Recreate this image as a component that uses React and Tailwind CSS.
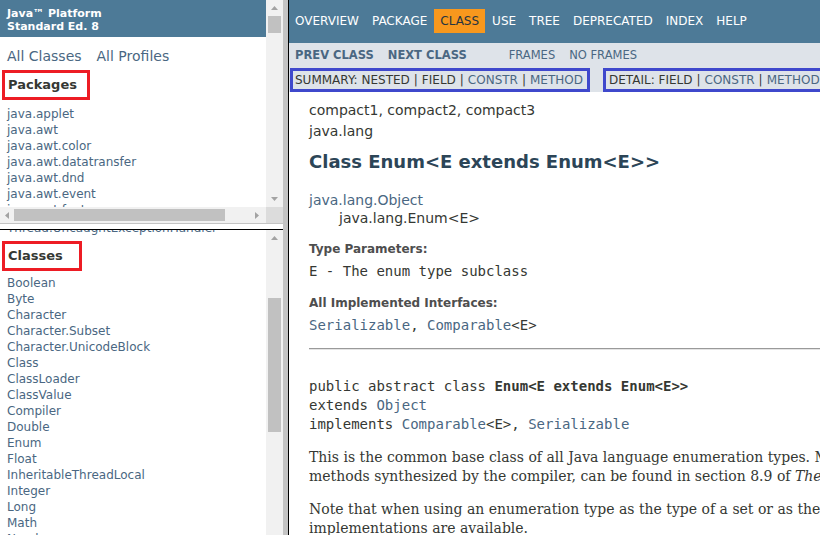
import React from "react";

const LINK = "text-[#4a6782]";

function Arrow({ dir }) {
  const pts = {
    up: "0,4 3.5,0 7,4",
    down: "0,0 7,0 3.5,4",
    left: "4,0 4,7 0,3.5",
    right: "0,0 0,7 4,3.5",
  };
  const flat = dir === "up" || dir === "down";
  return (
    <svg width={flat ? 7 : 4} height={flat ? 4 : 7} className="block">
      <polygon points={pts[dir]} fill="#a3a3a3" />
    </svg>
  );
}

const packages = [
  "java.applet",
  "java.awt",
  "java.awt.color",
  "java.awt.datatransfer",
  "java.awt.dnd",
  "java.awt.event",
  "java.awt.font",
  "java.awt.geom",
];

const classes = [
  "Boolean",
  "Byte",
  "Character",
  "Character.Subset",
  "Character.UnicodeBlock",
  "Class",
  "ClassLoader",
  "ClassValue",
  "Compiler",
  "Double",
  "Enum",
  "Float",
  "InheritableThreadLocal",
  "Integer",
  "Long",
  "Math",
  "Number",
  "Object",
];

const topNav = ["Overview", "Package", "Class", "Use", "Tree", "Deprecated", "Index", "Help"];

function RedBox({ children, w }) {
  return (
    <div
      className={`ml-[2px] h-[30px] border-[3px] border-[#ed1c24] pl-[3px] flex items-center text-[13px] font-bold text-[#353833] ${w}`}
    >
      {children}
    </div>
  );
}

function LeftFrames() {
  return (
    <div className="w-[283px] flex flex-col shrink-0">
      {/* top frame */}
      <div className="h-[223px] flex flex-col">
        <div className="h-[207px] flex">
          <div className="w-[266px] overflow-hidden">
            <div className="h-[37px] bg-[#4d7a97] pl-[7px] pt-[7px] text-white font-bold text-[11px] leading-[13px]">
              <div>Java™ Platform</div>
              <div>Standard Ed. 8</div>
            </div>
            <div className={`mt-[10px] pl-[7px] text-[14px] leading-[18px] whitespace-nowrap flex gap-[15px] ${LINK}`}>
              <span>All Classes</span>
              <span>All Profiles</span>
            </div>
            <div className="mt-[5px]">
              <RedBox w="w-[88px]">Packages</RedBox>
            </div>
            <ul className={`mt-[6px] pl-[7px] text-[12px] leading-[16px] whitespace-nowrap ${LINK}`}>
              {packages.map((p) => (
                <li key={p}>{p}</li>
              ))}
            </ul>
          </div>
          <div className="w-[17px] bg-[#f1f1f1] flex flex-col items-center">
            <div className="h-[16px] flex items-center justify-center">
              <Arrow dir="up" />
            </div>
            <div className="w-[13px] h-[17px] bg-[#c1c1c1]" />
            <div className="flex-1" />
            <div className="h-[16px] flex items-center justify-center">
              <Arrow dir="down" />
            </div>
          </div>
        </div>
        <div className="h-[16px] flex">
          <div className="w-[266px] bg-[#f1f1f1] flex items-center">
            <div className="w-[14px] flex justify-center">
              <Arrow dir="left" />
            </div>
            <div className="w-[211px] h-[12px] bg-[#c1c1c1]" />
            <div className="flex-1" />
            <div className="w-[18px] flex justify-center">
              <Arrow dir="right" />
            </div>
          </div>
          <div className="w-[17px] bg-[#dcdcdc]" />
        </div>
      </div>
      <div className="h-[1px] bg-[#c4c4c4]" />
      <div className="h-[5px] bg-white" />
      <div className="h-[1px] bg-black" />
      {/* bottom frame */}
      <div className="flex-1 flex min-h-0">
        <div className="w-[266px] overflow-hidden">
          <div className={`-mt-[10px] pl-[7px] text-[12px] leading-[16px] whitespace-nowrap ${LINK}`}>
            Thread.UncaughtExceptionHandler
          </div>
          <div className="mt-[5px]">
            <RedBox w="w-[80px]">Classes</RedBox>
          </div>
          <ul className={`mt-[4px] pl-[7px] text-[12px] leading-[16px] whitespace-nowrap ${LINK}`}>
            {classes.map((c) => (
              <li key={c}>{c}</li>
            ))}
          </ul>
        </div>
        <div className="w-[17px] bg-[#f1f1f1] flex flex-col items-center">
          <div className="h-[16px] flex items-center justify-center">
            <Arrow dir="up" />
          </div>
          <div className="mt-[52px] w-[13px] h-[134px] bg-[#c1c1c1]" />
        </div>
      </div>
    </div>
  );
}

function Sep() {
  return <span className="px-[4px]">|</span>;
}

function ClassPage() {
  return (
    <div className="flex-1 min-w-0 overflow-hidden">
      <div className="h-[43px] bg-[#4d7a97] pt-[9px]">
        <ul className="flex gap-[1px] text-[12px] leading-[14px] uppercase whitespace-nowrap">
          {topNav.map((n) => (
            <li
              key={n}
              className={
                n === "Class"
                  ? "px-[6px] py-[5px] bg-[#f8981d] text-[#253441]"
                  : "px-[6px] py-[5px] text-white"
              }
            >
              {n}
            </li>
          ))}
        </ul>
      </div>
      <div className="h-[49px] bg-[#dee3e9] uppercase whitespace-nowrap">
        <div className="h-[25px] flex items-center pl-[6px] text-[11.5px]">
          <span className={`font-bold ${LINK}`}>Prev Class</span>
          <span className={`ml-[14px] font-bold ${LINK}`}>Next Class</span>
          <span className={`ml-[42px] ${LINK}`}>Frames</span>
          <span className={`ml-[14px] ${LINK}`}>No Frames</span>
        </div>
        <div className="h-[24px] flex text-[12px] text-[#353833]">
          <div className="ml-[1px] shrink-0 border-[3px] border-[#3f48cc] pl-[2px] pr-[4px] flex items-center">
            Summary:&nbsp;Nested
            <Sep />
            Field
            <Sep />
            <span className={LINK}>Constr</span>
            <Sep />
            <span className={LINK}>Method</span>
          </div>
          <div className="ml-[13px] shrink-0 border-[3px] border-[#3f48cc] pl-[3px] pr-[4px] flex items-center">
            Detail:&nbsp;Field
            <Sep />
            <span className={LINK}>Constr</span>
            <Sep />
            <span className={LINK}>Method</span>
          </div>
        </div>
      </div>

      <div className="pl-[20px] text-[#353833] whitespace-nowrap">
        <div className="pt-[8px] text-[14px] leading-[20px]">compact1, compact2, compact3</div>
        <div className="mt-[1px] text-[14px] leading-[20px]">java.lang</div>
        <h2 className="mt-[9px] text-[18px] leading-[24px] font-bold text-[#2c4557]">
          Class Enum&lt;E extends Enum&lt;E&gt;&gt;
        </h2>
        <div className={`mt-[17px] text-[14px] leading-[18px] ${LINK}`}>java.lang.Object</div>
        <div className="pl-[30px] text-[14px] leading-[18px]">java.lang.Enum&lt;E&gt;</div>

        <div className="mt-[14px] text-[12px] leading-[16px] font-bold text-[#4e4e4e]">Type Parameters:</div>
        <div className="mt-[5px] font-['DejaVu_Sans_Mono',monospace] text-[14px] leading-[18px]">
          E - The enum type subclass
        </div>
        <div className="mt-[15px] text-[12px] leading-[16px] font-bold text-[#4e4e4e]">
          All Implemented Interfaces:
        </div>
        <div className="mt-[5px] font-['DejaVu_Sans_Mono',monospace] text-[14px] leading-[18px]">
          <span className={LINK}>Serializable</span>, <span className={LINK}>Comparable</span>&lt;E&gt;
        </div>
        <div className="mt-[14px] h-[2px] border-t border-t-[#9a9a9a] border-b border-b-[#e4e4e4]" />

        <div className="mt-[27px] font-['DejaVu_Sans_Mono',monospace] text-[14px] leading-[19px]">
          <div>
            public abstract class <b>Enum&lt;E extends Enum&lt;E&gt;&gt;</b>
          </div>
          <div>
            extends <span className={LINK}>Object</span>
          </div>
          <div>
            implements <span className={LINK}>Comparable</span>&lt;E&gt;, <span className={LINK}>Serializable</span>
          </div>
        </div>

        <div className="mt-[14px] font-['DejaVu_Serif',serif] text-[14px] leading-[19px]">
          <div>
            This is the common base class of all Java language enumeration types. More information about enums,
            including descriptions of the
          </div>
          <div>
            methods synthesized by the compiler, can be found in section 8.9 of{" "}
            <i>The Java™ Language Specification</i>.
          </div>
        </div>
        <div className="mt-[14px] font-['DejaVu_Serif',serif] text-[14px] leading-[19px]">
          <div>
            Note that when using an enumeration type as the type of a set or as the type of the keys in a map,
            specialized and efficient set and map
          </div>
          <div>implementations are available.</div>
        </div>
      </div>
    </div>
  );
}

export default function App() {
  return (
    <div className="w-[820px] h-[535px] overflow-hidden bg-white flex font-['DejaVu_Sans',sans-serif]">
      <LeftFrames />
      <div className="w-[5px] bg-[#c4c4c4] shrink-0" />
      <div className="w-[1px] bg-black shrink-0" />
      <ClassPage />
    </div>
  );
}
